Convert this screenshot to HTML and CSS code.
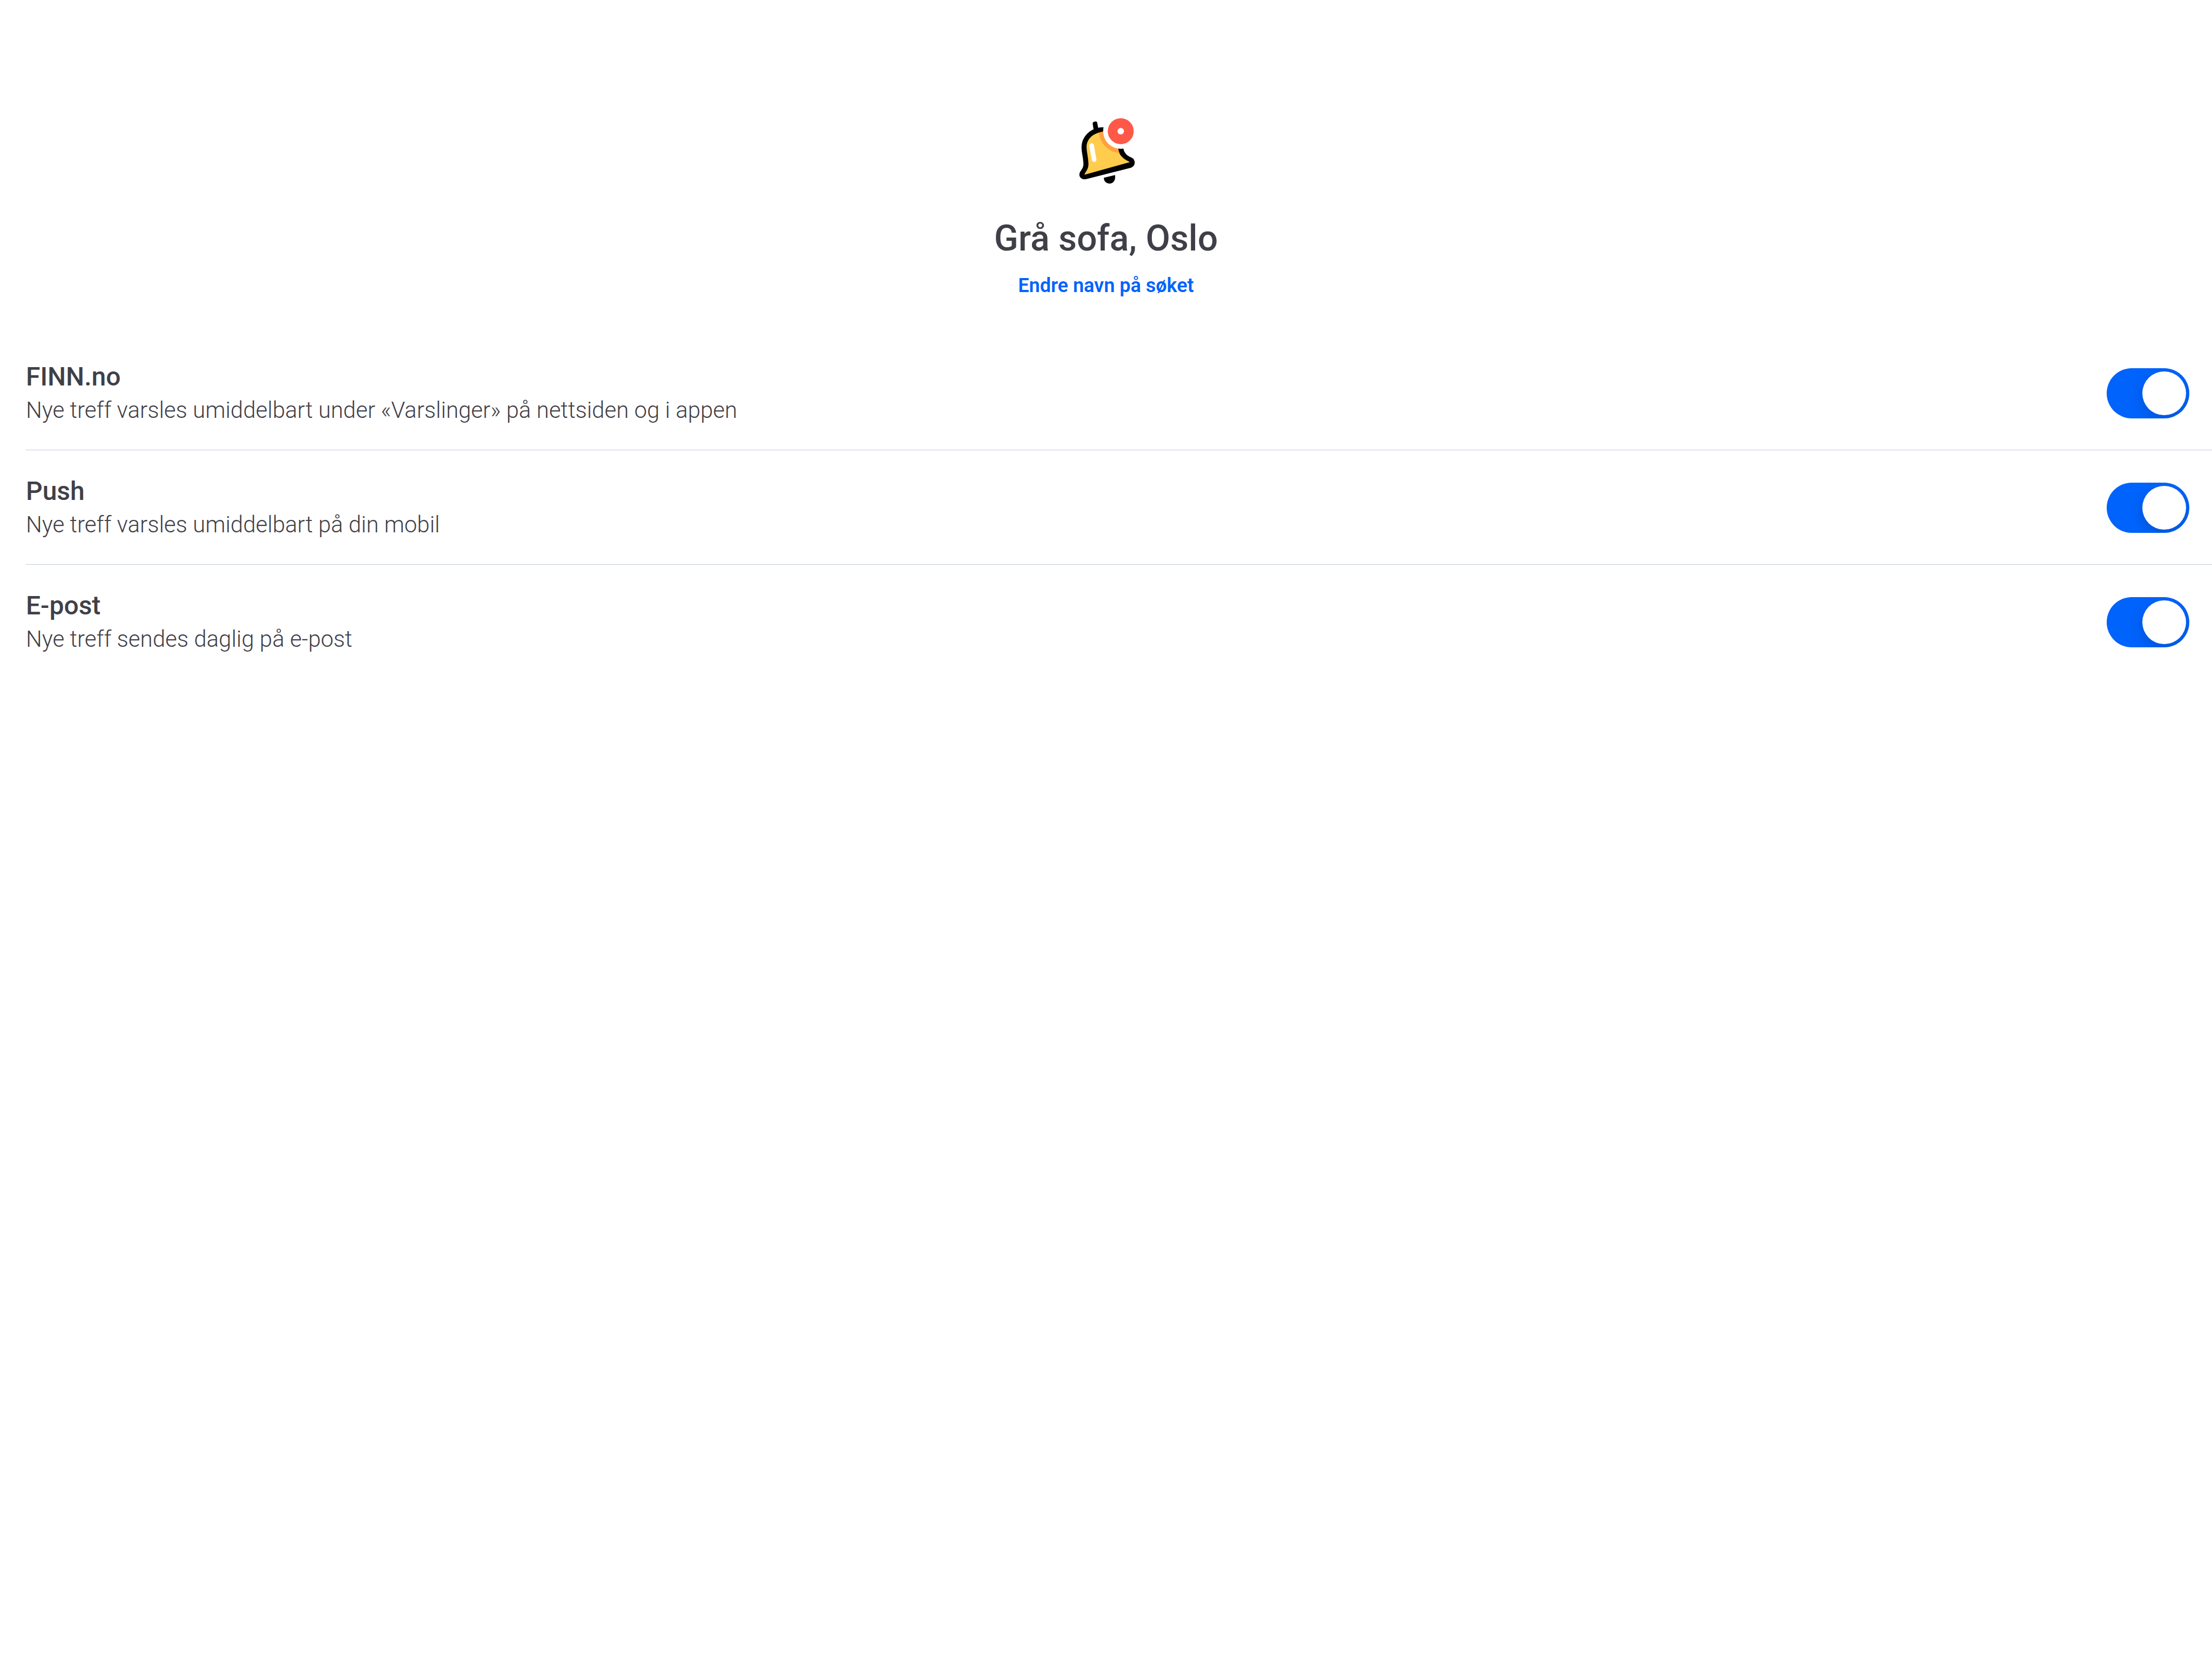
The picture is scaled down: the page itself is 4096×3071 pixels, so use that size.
FILE: index.html
```html
<!DOCTYPE html>
<html lang="no">
<head>
  <meta charset="utf-8">
  <title>Grå sofa, Oslo</title>
  <link rel="stylesheet" href="styles.css">
</head>
<body>
  <main class="page">
    <header class="header">
      <svg class="bell" viewBox="45 48 324 378" aria-hidden="true">
        <defs>
          <clipPath id="bell-body">
            <path d="M230 128C145 128 99 165 99 218C100 248 112 290 109 320C107 340 96 352 86 371L340 301C322 292 308 285 298 274C284 260 279 250 275 226Z"/>
          </clipPath>
        </defs>
        <path d="M133 87Q132 79 139 77L149 75Q157 74 158 82L164 112L138 120Z"/>
        <path d="M230 110L192 107C124 107 71 157 71 218C71 248 85 294 81 320C78 342 59 351 59 371C60 389 78 400 97 395L345 332C361 327 368 314 366 298C362 270 336 278 317 254C309 244 306 238 303 222Z"/>
        <g clip-path="url(#bell-body)">
          <rect x="80" y="128" width="270" height="250" fill="#ffcc4d"/>
          <circle cx="289" cy="129" r="121" fill="#ffa23e"/>
        </g>
        <path d="M127 209L141 287" stroke="#fff" stroke-width="26" stroke-linecap="round"/>
        <circle cx="289" cy="129" r="98" fill="#fff"/>
        <circle cx="289" cy="129" r="72" fill="#ff5848"/>
        <circle cx="289" cy="129" r="18" fill="#fff"/>
        <path d="M195 388L257 373C262 401 248 420 227 420C206 420 195 406 195 388Z"/>
      </svg>
      <h1 class="title">Grå sofa, Oslo</h1>
      <button class="rename" type="button">Endre navn på søket</button>
    </header>
    <ul class="channels">
      <li class="channel">
        <label class="channel-text" for="finn">
          <span class="channel-name">FINN.no</span>
          <span class="channel-info">Nye treff varsles umiddelbart under «Varslinger» på nettsiden og i appen</span>
        </label>
        <input class="toggle" id="finn" type="checkbox" role="switch" checked>
      </li>
      <li class="channel">
        <label class="channel-text" for="push">
          <span class="channel-name">Push</span>
          <span class="channel-info">Nye treff varsles umiddelbart på din mobil</span>
        </label>
        <input class="toggle" id="push" type="checkbox" role="switch" checked>
      </li>
      <li class="channel">
        <label class="channel-text" for="epost">
          <span class="channel-name">E-post</span>
          <span class="channel-info">Nye treff sendes daglig på e-post</span>
        </label>
        <input class="toggle" id="epost" type="checkbox" role="switch" checked>
      </li>
    </ul>
  </main>
</body>
</html>
```
FILE: styles.css
```css
* {
  box-sizing: border-box;
}

body {
  margin: 0;
  background: #fff;
  color: #3f4047;
  font-family: Roboto, "Liberation Sans", sans-serif;
}

.page {
  padding-top: 216px;
}

.header {
  display: flex;
  flex-direction: column;
  align-items: center;
}

.bell {
  width: 108px;
  height: 126px;
}

.title {
  margin: 60px 0 22px;
  font-size: 66px;
  font-weight: 500;
  line-height: 80px;
}

.rename {
  padding: 0;
  border: 0;
  background: none;
  color: #0063fb;
  font-family: inherit;
  font-size: 36px;
  font-weight: 600;
  line-height: 50px;
  cursor: pointer;
}

.channels {
  margin: 68px 0 0;
  padding: 0 0 0 48px;
  list-style: none;
}

.channel {
  display: flex;
  align-items: center;
  justify-content: space-between;
  padding: 44px 42px 43px 0;
}

.channel + .channel {
  border-top: 1px solid #c3ccd9;
}

.channel-text {
  display: flex;
  flex-direction: column;
}

.channel-name {
  font-size: 48px;
  font-weight: 500;
  line-height: 64px;
}

.channel-info {
  font-size: 42px;
  font-weight: 300;
  line-height: 60px;
}

.toggle {
  appearance: none;
  flex: none;
  display: flex;
  justify-content: flex-end;
  width: 153px;
  height: 93px;
  margin: 0;
  padding: 6px;
  overflow: hidden;
  border-radius: 47px;
  background: #0063fb;
  cursor: pointer;
}

.toggle::before {
  content: "";
  width: 81px;
  height: 81px;
  border-radius: 50%;
  background: #fff;
  box-shadow: 0 9px 24px rgba(0, 0, 0, 0.15);
}

.toggle:not(:checked) {
  justify-content: flex-start;
  background: #c3ccd9;
}
```
